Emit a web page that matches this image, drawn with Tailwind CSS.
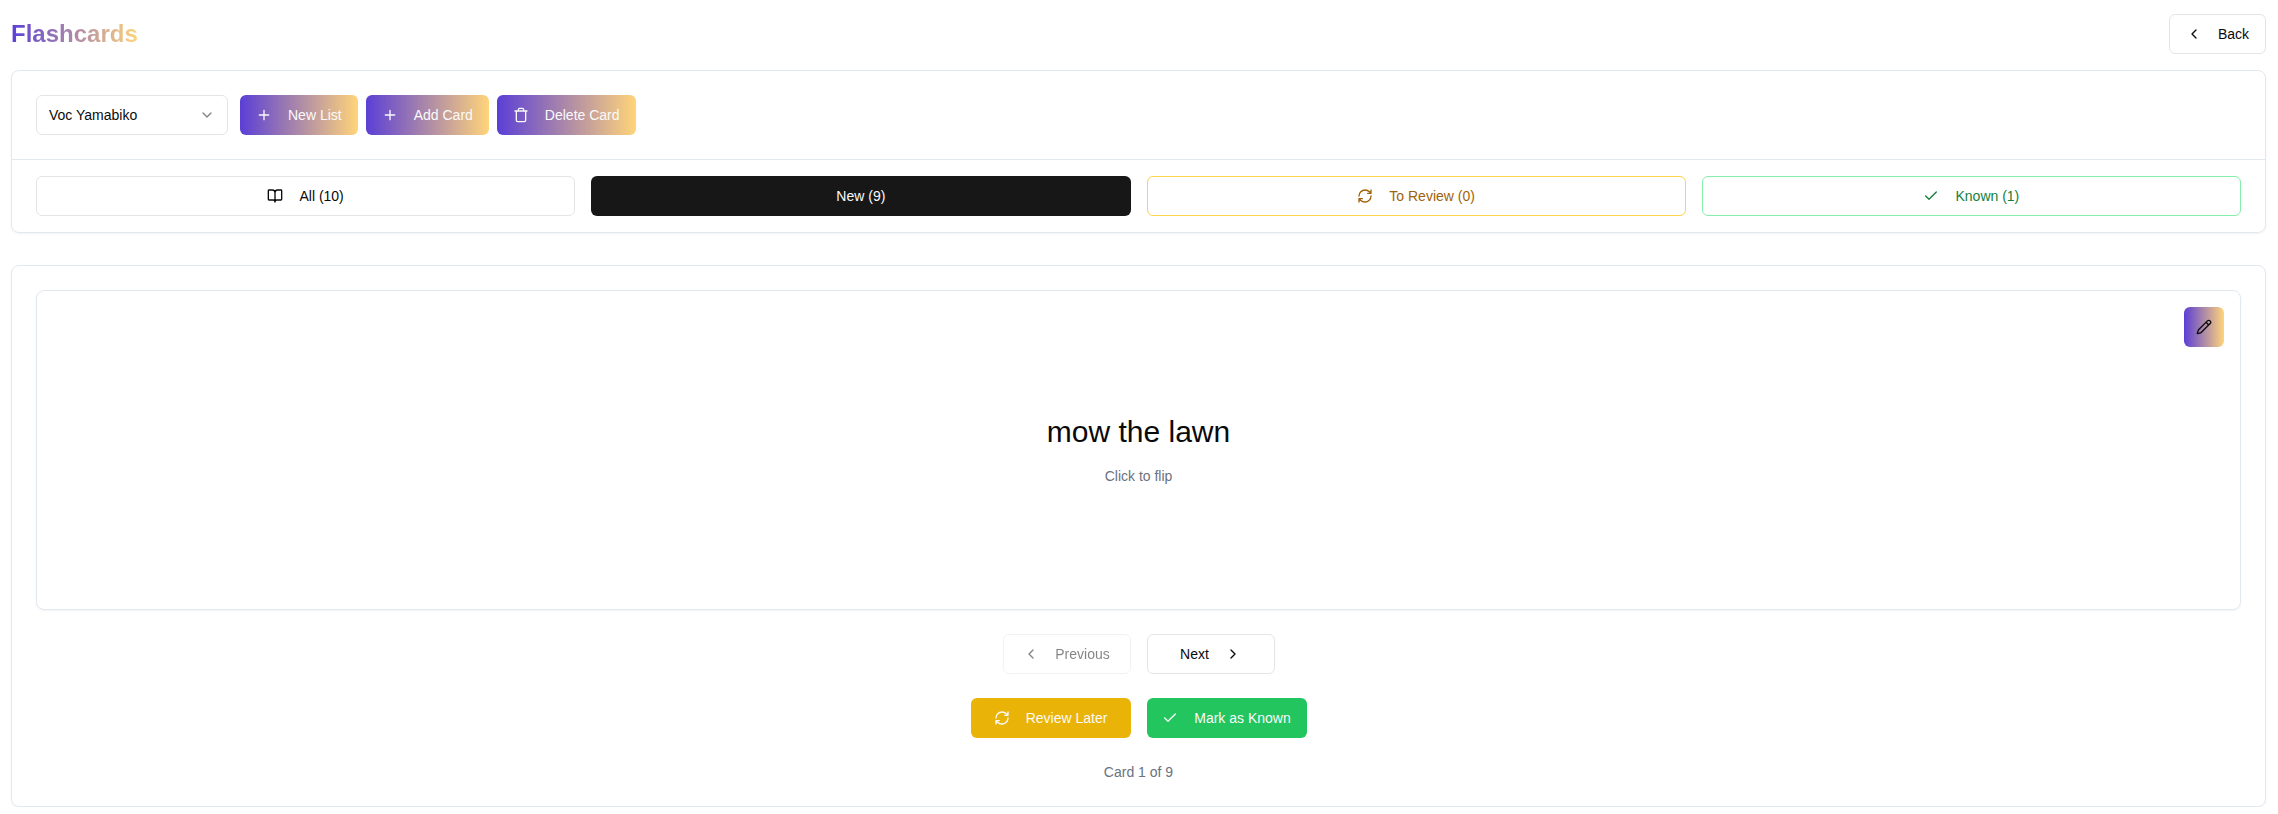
<!DOCTYPE html>
<html lang="en">
<head>
<meta charset="utf-8">
<title>Flashcards</title>
<script src="https://cdn.jsdelivr.net/npm/@tailwindcss/browser@4"></script>
</head>
<body class="bg-white font-['Liberation_Sans',Arial,sans-serif] text-sm text-[#0a0a0a]">
<svg class="hidden" fill="none">
  <symbol id="left" viewBox="0 0 24 24"><path d="m15 18-6-6 6-6"/></symbol>
  <symbol id="right" viewBox="0 0 24 24"><path d="m9 18 6-6-6-6"/></symbol>
  <symbol id="down" viewBox="0 0 24 24"><path d="m6 9 6 6 6-6"/></symbol>
  <symbol id="plus" viewBox="0 0 24 24"><path d="M5 12h14M12 5v14"/></symbol>
  <symbol id="trash" viewBox="0 0 24 24"><path d="M3 6h18M19 6v14c0 1-1 2-2 2H7c-1 0-2-1-2-2V6M8 6V4c0-1 1-2 2-2h4c1 0 2 1 2 2v2"/></symbol>
  <symbol id="book" viewBox="0 0 24 24"><path d="M12 7v14M3 18a1 1 0 0 1-1-1V4a1 1 0 0 1 1-1h5a4 4 0 0 1 4 4 4 4 0 0 1 4-4h5a1 1 0 0 1 1 1v13a1 1 0 0 1-1 1h-6a3 3 0 0 0-3 3 3 3 0 0 0-3-3z"/></symbol>
  <symbol id="refresh" viewBox="0 0 24 24"><path d="M3 12a9 9 0 0 1 9-9 9.75 9.75 0 0 1 6.74 2.74L21 8M21 3v5h-5M21 12a9 9 0 0 1-9 9 9.75 9.75 0 0 1-6.74-2.74L3 16M8 16H3v5"/></symbol>
  <symbol id="check" viewBox="0 0 24 24"><path d="M20 6 9 17l-5-5"/></symbol>
  <symbol id="pencil" viewBox="0 0 24 24"><path d="M21.174 6.812a1 1 0 0 0-3.986-3.987L3.842 16.174a2 2 0 0 0-.5.83l-1.321 4.352a.5.5 0 0 0 .623.622l4.353-1.32a2 2 0 0 0 .83-.497zM15 5l4 4"/></symbol>
</svg>
<div class="mr-3 ml-[11px] flex flex-col pt-3.5">
  <header class="flex h-10 items-center justify-between">
    <h1 class="bg-linear-to-r/srgb from-[#5b3fd6] to-[#ffd47a] bg-clip-text text-2xl font-bold text-transparent">Flashcards</h1>
    <button class="flex h-10 items-center gap-4 rounded-md border border-neutral-200 px-4"><svg class="size-4 fill-none stroke-current stroke-2 [stroke-linecap:round] [stroke-linejoin:round]"><use href="#left"/></svg>Back</button>
  </header>

  <section class="mt-4 rounded-lg border border-[#e2e8f0] shadow-[0_1px_2px_rgba(0,0,0,0.05)]">
    <div class="flex border-b border-[#e2e8f0] p-6">
      <button class="mr-3 flex h-10 w-48 items-center justify-between rounded-md border border-neutral-200 px-3">Voc Yamabiko<svg class="size-4 fill-none stroke-current stroke-2 opacity-50 [stroke-linecap:round] [stroke-linejoin:round]"><use href="#down"/></svg></button>
      <div class="flex gap-2 text-neutral-50">
        <button class="flex h-10 items-center gap-4 rounded-md bg-linear-to-r/srgb from-[#5b3fd6] to-[#ffd47a] px-4"><svg class="size-4 fill-none stroke-current stroke-2 [stroke-linecap:round] [stroke-linejoin:round]"><use href="#plus"/></svg>New List</button>
        <button class="flex h-10 items-center gap-4 rounded-md bg-linear-to-r/srgb from-[#5b3fd6] to-[#ffd47a] px-4"><svg class="size-4 fill-none stroke-current stroke-2 [stroke-linecap:round] [stroke-linejoin:round]"><use href="#plus"/></svg>Add Card</button>
        <button class="flex h-10 items-center gap-4 rounded-md bg-linear-to-r/srgb from-[#5b3fd6] to-[#ffd47a] px-4"><svg class="size-4 fill-none stroke-current stroke-2 [stroke-linecap:round] [stroke-linejoin:round]"><use href="#trash"/></svg>Delete Card</button>
      </div>
    </div>
    <div class="grid grid-cols-4 gap-4 px-6 py-4">
      <button class="flex h-10 items-center justify-center gap-4 rounded-md border border-neutral-200"><svg class="size-4 fill-none stroke-current stroke-2 [stroke-linecap:round] [stroke-linejoin:round]"><use href="#book"/></svg>All (10)</button>
      <button class="h-10 rounded-md bg-[#171717] text-neutral-50">New (9)</button>
      <button class="flex h-10 items-center justify-center gap-4 rounded-md border border-[#fcd34d] text-[#a16207]"><svg class="size-4 fill-none stroke-current stroke-2 [stroke-linecap:round] [stroke-linejoin:round]"><use href="#refresh"/></svg>To Review (0)</button>
      <button class="flex h-10 items-center justify-center gap-4 rounded-md border border-[#86efac] text-[#15803d]"><svg class="size-4 fill-none stroke-current stroke-2 [stroke-linecap:round] [stroke-linejoin:round]"><use href="#check"/></svg>Known (1)</button>
    </div>
  </section>

  <section class="mt-8 rounded-lg border border-[#e2e8f0] p-6 shadow-[0_1px_2px_rgba(0,0,0,0.05)]">
    <div class="relative flex h-80 flex-col items-center justify-center rounded-lg border border-[#e2e8f0] shadow-[0_1px_2px_rgba(0,0,0,0.05)]">
      <button class="absolute top-4 right-4 flex size-10 items-center justify-center rounded-md bg-linear-to-r/srgb from-[#5b3fd6] to-[#ffd47a]"><svg class="size-4 fill-none stroke-current stroke-2 [stroke-linecap:round] [stroke-linejoin:round]"><use href="#pencil"/></svg></button>
      <p class="text-3xl">mow the lawn</p>
      <p class="mt-4 text-[#6b7280]">Click to flip</p>
    </div>
    <div class="mt-6 flex justify-center gap-4">
      <button class="flex h-10 w-32 items-center justify-center gap-4 rounded-md border border-neutral-200 opacity-50"><svg class="size-4 fill-none stroke-current stroke-2 [stroke-linecap:round] [stroke-linejoin:round]"><use href="#left"/></svg>Previous</button>
      <button class="flex h-10 w-32 items-center justify-center gap-4 rounded-md border border-neutral-200">Next<svg class="size-4 fill-none stroke-current stroke-2 [stroke-linecap:round] [stroke-linejoin:round]"><use href="#right"/></svg></button>
    </div>
    <div class="mt-6 flex justify-center gap-4 text-neutral-50">
      <button class="flex h-10 w-40 items-center justify-center gap-4 rounded-md bg-[#eab308]"><svg class="size-4 fill-none stroke-current stroke-2 [stroke-linecap:round] [stroke-linejoin:round]"><use href="#refresh"/></svg>Review Later</button>
      <button class="flex h-10 w-40 items-center justify-center gap-4 rounded-md bg-[#22c55e]"><svg class="size-4 fill-none stroke-current stroke-2 [stroke-linecap:round] [stroke-linejoin:round]"><use href="#check"/></svg>Mark as Known</button>
    </div>
    <p class="mt-6 text-center text-[#6b7280]">Card 1 of 9</p>
  </section>
</div>
</body>
</html>
